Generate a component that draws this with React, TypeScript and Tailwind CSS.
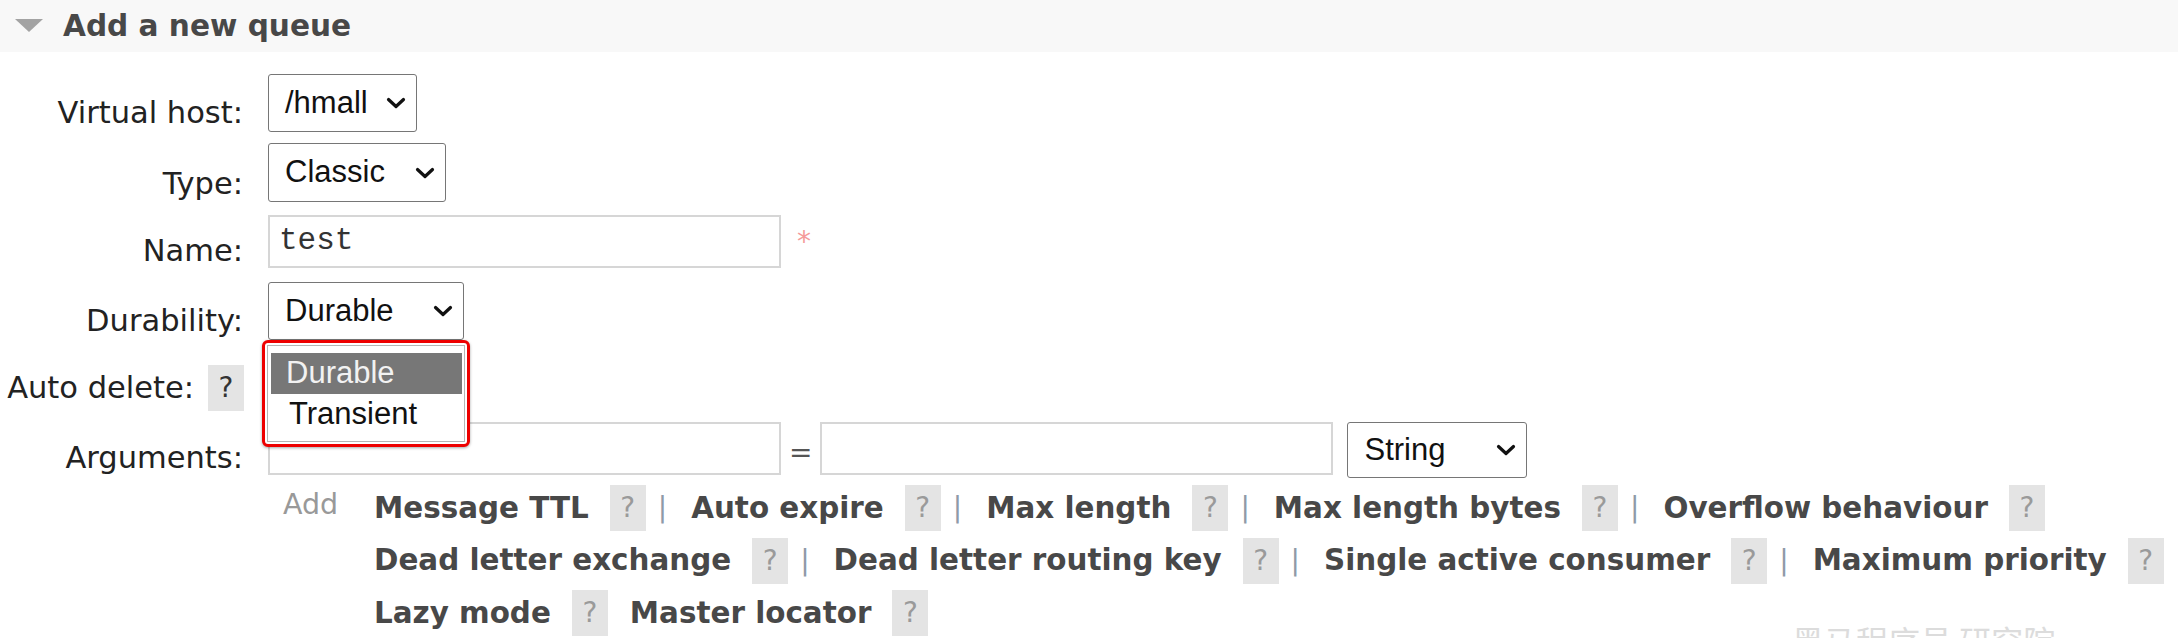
import React from "react";

const labelCls =
  "w-[243px] shrink-0 text-right pt-[22px] font-['DejaVu_Sans',Verdana,sans-serif] text-[30.5px] leading-[34px] text-[#222]";
const ctrlFont = "font-['Liberation_Sans',Arial,sans-serif] text-[31px] text-[#111]";
const linkFont = "font-['DejaVu_Sans',Verdana,sans-serif] font-bold text-[29.4px] text-[#484848]";

function Chevron() {
  return (
    <svg width="20" height="12" viewBox="0 0 20 12">
      <path
        d="M2.5 2.5 L10 9.5 L17.5 2.5"
        fill="none"
        stroke="#111"
        strokeWidth="3.2"
        strokeLinecap="round"
        strokeLinejoin="round"
      />
    </svg>
  );
}

function FakeSelect({ value, size }: { value: string; size: string }) {
  return (
    <div
      className={`flex items-center justify-between pl-[16px] pr-[10px] border border-[#767676] rounded-[3px] bg-white ${ctrlFont} ${size}`}
    >
      <span>{value}</span>
      <Chevron />
    </div>
  );
}

function Help({ dark }: { dark?: boolean }) {
  return (
    <span
      className={`inline-flex items-center justify-center w-[36px] h-[46px] bg-[#e4e4e4] font-['DejaVu_Sans',Verdana,sans-serif] text-[28px] ${
        dark ? "text-[#333]" : "text-[#9a9a9a]"
      }`}
    >
      ?
    </span>
  );
}

function Sep() {
  return (
    <span className="ml-[12px] mr-[24px] font-['DejaVu_Sans',sans-serif] text-[28px] text-[#8f9aa8]">|</span>
  );
}

function ArgLink({ name, last, tight }: { name: string; last?: boolean; tight?: boolean }) {
  return (
    <span className="flex items-center">
      <span className={linkFont}>{name}</span>
      <span className="ml-[21px]">
        <Help />
      </span>
      {!last && (tight ? <span className="w-[22px]" /> : <Sep />)}
    </span>
  );
}

export default function App() {
  return (
    <div className="relative w-[2178px] h-[638px] overflow-hidden bg-white">
      {/* section header */}
      <div className="flex items-center h-[52px] bg-[#f8f8f8]">
        <svg className="ml-[15px]" width="28" height="14" viewBox="0 0 28 14">
          <polygon points="0,0 28,0 14,13" fill="#a3a3a3" />
        </svg>
        <h2 className="ml-[20px] font-['DejaVu_Sans',Verdana,sans-serif] font-bold text-[29.6px] text-[#484848]">
          Add a new queue
        </h2>
      </div>

      <div className="flex flex-col pt-[22px]">
        {/* Virtual host */}
        <div className="flex items-start h-[58px]">
          <div className={labelCls}>Virtual host:</div>
          <div className="ml-[25px]">
            <FakeSelect value="/hmall" size="w-[149px] h-[58px]" />
          </div>
        </div>

        {/* Type */}
        <div className="flex items-start h-[59px] mt-[11px]">
          <div className={`${labelCls} !pt-[24px]`}>Type:</div>
          <div className="ml-[25px]">
            <FakeSelect value="Classic" size="w-[178px] h-[59px]" />
          </div>
        </div>

        {/* Name */}
        <div className="flex items-start h-[53px] mt-[13px]">
          <div className={`${labelCls} !pt-[19px]`}>Name:</div>
          <div className="ml-[25px] flex items-start">
            <div className="flex items-center w-[513px] h-[53px] border-2 border-[#d6d6d6] pl-[9px] font-['Liberation_Mono',monospace] text-[31px] text-[#333]">
              test
            </div>
            <span className="ml-[16px] mt-[6px] font-['DejaVu_Sans',sans-serif] text-[28px] text-[#f59a9a]">*</span>
          </div>
        </div>

        {/* Durability */}
        <div className="flex items-start h-[58px] mt-[14px]">
          <div className={labelCls}>Durability:</div>
          <div className="ml-[25px] relative">
            <FakeSelect value="Durable" size="w-[196px] h-[58px]" />
            {/* opened options list, outlined in red */}
            <div className="absolute z-10 left-[-6px] top-[58px] w-[208px] h-[107px] border-[3px] border-[#ee0000] rounded-[6px] bg-white p-[2px] shadow-[0_1px_3px_rgba(0,0,0,0.35)]">
              <div className={`w-full h-full border border-[#b5b5b5] bg-white pt-[7px] pl-[3px] pr-[2px] ${ctrlFont}`}>
                <div className="h-[41px] flex items-center pl-[15px] bg-[#777777] text-[#f2f2f2]">Durable</div>
                <div className="h-[41px] flex items-center pl-[18px]">Transient</div>
              </div>
            </div>
          </div>
        </div>

        {/* Auto delete */}
        <div className="flex items-start h-[46px] mt-[25px]">
          <div className="w-[244px] shrink-0 flex items-center justify-end font-['DejaVu_Sans',Verdana,sans-serif] text-[30.5px] text-[#222]">
            <span className="mr-[14px]">Auto delete:</span>
            <Help dark />
          </div>
        </div>

        {/* Arguments */}
        <div className="flex items-start h-[56px] mt-[11px]">
          <div className={`${labelCls} !pt-[19px]`}>Arguments:</div>
          <div className="ml-[25px] flex items-start">
            <div className="w-[513px] h-[53px] border-2 border-[#d6d6d6]" />
            <span className="ml-[8px] mr-[8px] mt-[10px] font-['DejaVu_Sans',sans-serif] text-[28px] text-[#555]">=</span>
            <div className="w-[513px] h-[53px] border-2 border-[#d6d6d6]" />
            <div className="ml-[14px]">
              <FakeSelect value="String" size="w-[180px] h-[56px]" />
            </div>
          </div>
        </div>

        {/* Argument shortcuts */}
        <div className="flex items-start mt-[7px]">
          <div className="w-[283px] shrink-0" />
          <div className="w-[91px] shrink-0 h-[46px] pb-[6px] flex items-center font-['DejaVu_Sans',Verdana,sans-serif] text-[28.5px] text-[#999]">
            Add
          </div>
          <div className="flex flex-col gap-[7px]">
            <div className="flex items-center h-[46px]">
              <ArgLink name="Message TTL" />
              <ArgLink name="Auto expire" />
              <ArgLink name="Max length" />
              <ArgLink name="Max length bytes" />
              <ArgLink name="Overflow behaviour" last />
            </div>
            <div className="flex items-center h-[45px]">
              <ArgLink name="Dead letter exchange" />
              <ArgLink name="Dead letter routing key" />
              <ArgLink name="Single active consumer" />
              <ArgLink name="Maximum priority" last />
            </div>
            <div className="flex items-center h-[46px]">
              <ArgLink name="Lazy mode" tight />
              <ArgLink name="Master locator" last />
            </div>
          </div>
        </div>
      </div>

      {/* watermark */}
      <div className="absolute left-[1792px] top-[624px] whitespace-nowrap font-['Noto_Sans_CJK_SC',sans-serif] text-[32px] leading-none text-[#dcdcdc]">
        黑马程序员 研究院
      </div>
    </div>
  );
}
